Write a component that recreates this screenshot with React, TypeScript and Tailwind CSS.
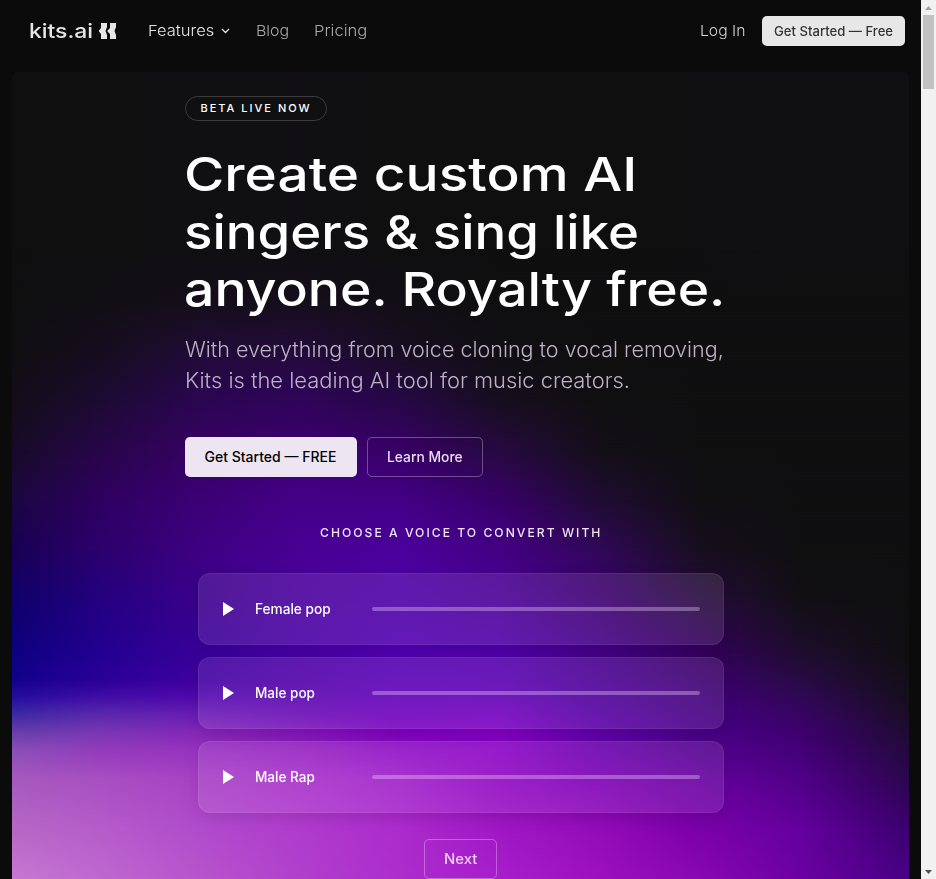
import { useLayoutEffect, useRef, useState } from "react";

const XS = [0, 88, 188, 288, 388, 488, 588, 688, 788, 897];
const K = "#0f0f10";

// Hero glow: each row is a horizontal gradient, rows fade into one another.
const ROWS: [number, string[]][] = [
  [178, [K, K, "#100f12", "#110f13", K, K, K, "#0f0f11", "#101012", "#101012"]],
  [228, [K, "#110f13", "#150e1a", "#160e1c", "#120f15", K, K, K, K, K]],
  [278, ["#100f11", "#160d1f", "#210c36", "#230b3a", "#180e22", "#110f13", K, K, K, K]],
  [328, ["#130e19", "#1c0b32", "#2a0652", "#30045a", "#260846", "#170e1e", "#100f11", K, K, K]],
  [378, ["#170b28", "#270648", "#370262", "#3c0070", "#380066", "#260a40", "#140f18", K, K, K]],
  [428, ["#1b0740", "#2e0060", "#3c0076", "#440088", "#430086", "#380069", "#200c32", "#110f13", K, K]],
  [478, ["#180054", "#2c006c", "#3e0082", "#490094", "#4b009c", "#430084", "#300858", "#180e1e", K, K]],
  [528, ["#10006a", "#240080", "#3a008c", "#48009c", "#4e00a6", "#4a0096", "#3c0070", "#260c3c", "#120f15", K]],
  [578, ["#0e0080", "#220090", "#380098", "#4800a4", "#5000b0", "#5000a8", "#440086", "#34005e", "#1e0d2c", "#100f11"]],
  [608, ["#14008c", "#2a0098", "#4000a0", "#5000a8", "#5800b4", "#5800b0", "#4a0092", "#3c006e", "#280b44", "#130f17"]],
  [624, ["#240c9c", "#400ca4", "#5008ac", "#5804ac", "#6000b8", "#6000b4", "#4e0098", "#400078", "#2f0854", "#160e1c"]],
  [642, ["#3c28a4", "#5828ac", "#681cb4", "#680cb4", "#6c00bc", "#7000bc", "#5400a0", "#440080", "#360562", "#1a0d26"]],
  [662, ["#6a40ac", "#7c38b4", "#8628b8", "#8418bc", "#8004c0", "#8400c4", "#6000a8", "#4a0088", "#3e0070", "#200b34"]],
  [680, ["#8c50b8", "#963cbc", "#9834c0", "#9824c0", "#9010c4", "#8c04c4", "#6a00ac", "#540090", "#440078", "#240a3e"]],
  [708, ["#a65abe", "#a850c2", "#a842c4", "#a832c8", "#a020c8", "#9008c0", "#7c00b4", "#66009e", "#500088", "#2c0650"]],
  [758, ["#b668c6", "#b65cca", "#b04ccc", "#b03ccc", "#ac2ccc", "#a018c4", "#940cb8", "#7c00aa", "#64009e", "#3c0070"]],
  [807, ["#c678d2", "#bf68d0", "#b854cc", "#b040cc", "#ac2ccc", "#a81ecc", "#9c10c0", "#8808b4", "#6c00a2", "#480086"]],
];

function Glow() {
  return (
    <svg className="absolute inset-0 h-full w-full" viewBox="0 0 897 807" preserveAspectRatio="none" aria-hidden="true">
      <defs>
        {ROWS.map(([y, colors], i) => (
          <linearGradient key={y} id={`row${i}`} gradientUnits="userSpaceOnUse" x1="0" x2="897" y1="0" y2="0">
            {colors.map((c, j) => (
              <stop key={j} offset={XS[j] / 897} stopColor={c} />
            ))}
          </linearGradient>
        ))}
        {ROWS.slice(1).map(([y], i) => (
          <g key={y}>
            <linearGradient id={`fade${i + 1}`} gradientUnits="userSpaceOnUse" x1="0" x2="0" y1={ROWS[i][0]} y2={y}>
              <stop offset="0" stopColor="#fff" stopOpacity="0" />
              <stop offset="1" stopColor="#fff" />
            </linearGradient>
            <mask id={`mask${i + 1}`} maskUnits="userSpaceOnUse" x="0" y="0" width="897" height="807">
              <rect y={ROWS[i][0]} width="897" height="807" fill={`url(#fade${i + 1})`} />
            </mask>
          </g>
        ))}
      </defs>
      {ROWS.map(([y], i) => (
        <rect
          key={y}
          width="897"
          height="807"
          fill={`url(#row${i})`}
          mask={i ? `url(#mask${i})` : undefined}
        />
      ))}
    </svg>
  );
}

// Widens or narrows a line of text so that it spans exactly `width` pixels.
function Fit({ width, children }: { width: number; children: string }) {
  const ref = useRef<HTMLSpanElement>(null);
  const [scale, setScale] = useState(1);
  useLayoutEffect(() => {
    if (ref.current) setScale(width / ref.current.offsetWidth);
  }, [width]);
  return (
    <span className="inline-block text-left" style={{ width }}>
      <span ref={ref} className="inline-block origin-left whitespace-nowrap" style={{ transform: `scaleX(${scale})` }}>
        {children}
      </span>
    </span>
  );
}

function Track({ name, width }: { name: string; width: number }) {
  return (
    <div className="flex h-[72px] items-center rounded-xl border border-white/7 bg-[#f0d0ff]/12 pr-[23px] pl-6 shadow-[0_4px_16px_rgba(0,0,0,0.1)]">
      <svg className="h-[14px] w-[11px] fill-white" viewBox="0 0 11 14">
        <path d="M0 0 11 7 0 14Z" />
      </svg>
      <div className="ml-[21px] w-[117px] text-[14px] font-medium text-white">
        <Fit width={width}>{name}</Fit>
      </div>
      <div className="h-1 flex-1 rounded-full bg-[#f0d8ff]/35" />
    </div>
  );
}

export default function App() {
  return (
    <div className="flex h-[879px] w-[936px] overflow-hidden bg-[#0b0b0b] font-['Inter','Liberation_Sans',sans-serif]">
      <div className="flex w-[921px] flex-col">
        <header className="flex h-[72px] items-start pt-4 pr-4 pl-[29px]">
          <a className="flex h-[30px] items-center text-[#e6e6e6]">
            <span className="text-[20px] leading-[30px] font-medium">
              <Fit width={64}>kits.ai</Fit>
            </span>
            <svg className="ml-[6px] h-4 w-[17px] fill-current" viewBox="0 0 17 16">
              <path d="M2 0H8V4L6.5 8 8 12V16H2V11L0 8.5V7.5L2 5Z" />
              <path d="M11 0H17V4L15.500 8 17 12V16H11V11L8.500 8.500V7.500L11 5Z" />
            </svg>
          </a>
          <nav className="ml-8 flex h-[30px] items-center text-[15px] font-light text-[#a9a9a9]">
            <span className="text-[#e4e4e4]">
              <Fit width={66}>Features</Fit>
            </span>
            <svg className="ml-[7px] h-2 w-[9px] fill-none stroke-[#e4e4e4]" viewBox="0 0 9 8" strokeWidth="1.3">
              <path d="M1 2 4.500 5.500 8 2" />
            </svg>
            <span className="ml-[26px]">
              <Fit width={33}>Blog</Fit>
            </span>
            <span className="ml-[25px]">
              <Fit width={53}>Pricing</Fit>
            </span>
          </nav>
          <div className="ml-auto flex h-[30px] items-center gap-[17px]">
            <span className="text-[15px] font-light text-[#d0d0d0]">
              <Fit width={45}>Log In</Fit>
            </span>
            <button className="h-[30px] w-[143px] rounded-[5px] bg-[#e7e7e7] pt-px text-[13px] font-medium text-[#333]">
              <Fit width={119}>Get Started — Free</Fit>
            </button>
          </div>
        </header>

        <main className="relative mx-3 h-[807px] overflow-hidden rounded-t-md">
          <Glow />
          <div className="relative mx-auto flex w-[552px] flex-col items-start pt-6">
            <div className="flex h-[25px] w-[142px] items-center justify-center rounded-full border border-[#3d3d3e] pl-px text-[11px] font-medium tracking-[2px] text-white">
              <Fit width={111}>BETA LIVE NOW</Fit>
            </div>
            <h1 className="mt-6 -ml-px flex flex-col text-[47px] leading-[57.6px] font-medium text-white">
              <Fit width={453}>Create custom AI</Fit>
              <Fit width={455}>singers &amp; sing like</Fit>
              <Fit width={541}>anyone. Royalty free.</Fit>
            </h1>
            <p className="mt-4 flex flex-col text-[21px] leading-[31px] font-light text-[#bcb2c4]">
              <Fit width={539}>With everything from voice cloning to vocal removing,</Fit>
              <Fit width={445}>Kits is the leading AI tool for music creators.</Fit>
            </p>
            <div className="mt-[41px] flex gap-[10px] text-[14px] font-medium">
              <button className="h-10 w-[172px] rounded-[5px] bg-[#ede6f2] text-black">
                <Fit width={132}>Get Started — FREE</Fit>
              </button>
              <button className="h-10 w-[116px] rounded-[5px] border border-white/30 text-[#e9dcf2]">
                <Fit width={76}>Learn More</Fit>
              </button>
            </div>
            <div className="mt-[46px] flex h-5 w-full items-center justify-center text-[12px] font-medium tracking-[2px] text-[#eee4f6]">
              <Fit width={282}>CHOOSE A VOICE TO CONVERT WITH</Fit>
            </div>
            <div className="mt-[30px] flex w-[526px] flex-col gap-3 self-center">
              <Track name="Female pop" width={76} />
              <Track name="Male pop" width={60} />
              <Track name="Male Rap" width={60} />
            </div>
            <button className="mt-[26px] h-10 w-[73px] self-center rounded-[5px] border border-white/30 text-[14px] font-medium text-[#ecd0f4]">
              <Fit width={33}>Next</Fit>
            </button>
          </div>
        </main>
      </div>

      <aside className="flex w-[15px] flex-col items-center bg-[#f1f1f1]">
        <div className="flex h-[15px] items-center">
          <svg className="h-1 w-[7px] fill-[#a3a3a3]" viewBox="0 0 7 4">
            <path d="M3.500 0 7 4H0Z" />
          </svg>
        </div>
        <div className="h-[74px] w-[11px] bg-[#c1c1c1]" />
        <div className="mt-auto flex h-[15px] items-center">
          <svg className="h-1 w-[7px] fill-[#505050]" viewBox="0 0 7 4">
            <path d="M0 0H7L3.500 4Z" />
          </svg>
        </div>
      </aside>
    </div>
  );
}
